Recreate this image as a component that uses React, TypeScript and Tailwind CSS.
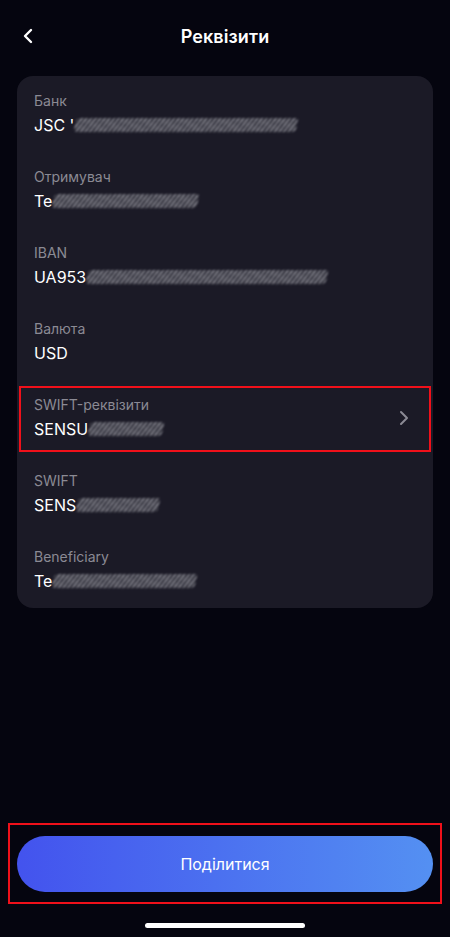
import { ChevronLeft, ChevronRight } from "lucide-react";

const ROWS = [
  { label: "Банк", value: "JSC '", blur: 222 },
  { label: "Отримувач", value: "Te", blur: 145 },
  { label: "IBAN", value: "UA953", blur: 240 },
  { label: "Валюта", value: "USD", blur: 0 },
  { label: "SWIFT-реквізити", value: "SENSU", blur: 74, link: true },
  { label: "SWIFT", value: "SENS", blur: 82 },
  { label: "Beneficiary", value: "Te", blur: 143 },
];

const Scribble = ({ width }: { width: number }) => (
  <span
    className="inline-block h-[14px] ml-[1px] align-middle rounded-[4px] -skew-x-12 opacity-75 blur-[1.3px] bg-[repeating-linear-gradient(120deg,#a0a0a8_0_2px,#34343e_2px_4px)]"
    style={{ width }}
  />
);

const App = () => {
  return (
    <div className="h-[937px] w-full flex flex-col bg-[#05050f] text-white font-['Inter','Roboto',sans-serif]">
      <header className="h-[72px] relative flex items-center justify-center shrink-0">
        <button className="absolute left-[16px] top-[24px] text-white">
          <ChevronLeft size={24} strokeWidth={2.4} />
        </button>
        <h1 className="text-[18px] font-semibold tracking-[0.1px]">Реквізити</h1>
      </header>

      <div className="mx-[17px] mt-[4px] rounded-[16px] bg-[#1b1a26] pt-4 pb-[17px] px-[17px] flex flex-col gap-[33px]">
        {ROWS.map((row, index) => (
          <div key={index} className="relative flex items-center justify-between">
            <div>
              <div className="text-[14px] leading-[18px] text-[#8b8a94]">{row.label}</div>
              <div className="mt-[5px] text-[16px] leading-[20px] flex items-center whitespace-nowrap">
                {row.value}
                {row.blur > 0 && <Scribble width={row.blur} />}
              </div>
            </div>
            {row.link && (
              <>
                <ChevronRight size={24} strokeWidth={2} className="text-[#8b8a94] mr-0" />
                <div className="absolute -left-[15px] -right-[15px] -top-[10px] -bottom-[13px] border-2 border-[#f0101a] pointer-events-none" />
              </>
            )}
          </div>
        ))}
      </div>

      <div className="flex-1" />

      <div className="relative mx-[17px] shrink-0">
        <button className="w-full h-[56px] rounded-full bg-[linear-gradient(90deg,#4353ee,#5490f2)] text-[16px] text-white">
          Поділитися
        </button>
        <div className="absolute -left-[9px] -right-[9px] -top-[13px] -bottom-[12px] border-2 border-[#f0101a] pointer-events-none" />
      </div>

      <div className="mt-[31px] mb-[9px] mx-auto w-[160px] h-[5px] rounded-full bg-white shrink-0" />
    </div>
  );
};

export default App;
